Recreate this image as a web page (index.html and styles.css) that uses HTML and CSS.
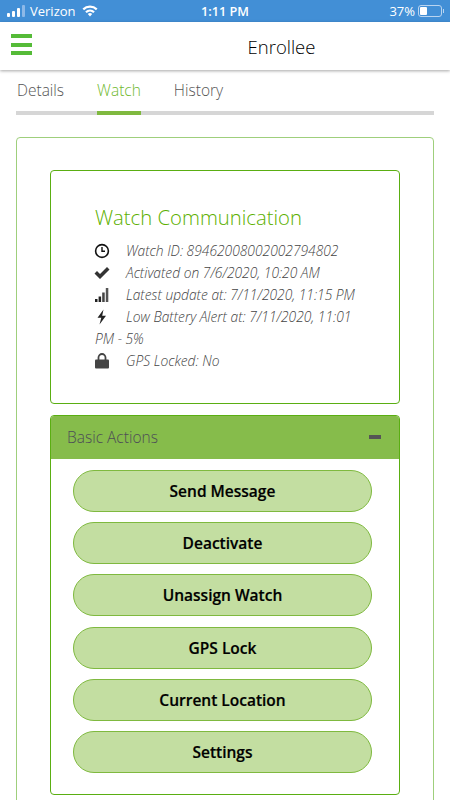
FILE: index.html
```html
<!DOCTYPE html>
<html lang="en">
<head>
  <meta charset="UTF-8" />
  <meta name="viewport" content="width=device-width, initial-scale=1.0" />
  <title>Enrollee</title>
  <link rel="stylesheet" href="styles.css">
</head>
<body>
  <!-- STATUS BAR -->
  <div class="status-bar">
    <div class="status-left">
      <svg class="signal" width="20" height="12" viewBox="0 0 20 12">
        <rect x="0" y="8" width="3" height="4" rx="1" fill="#fff"/>
        <rect x="5" y="6" width="3" height="6" rx="1" fill="#fff"/>
        <rect x="10" y="3" width="3" height="9" rx="1" fill="#fff"/>
        <rect x="15" y="0" width="3" height="12" rx="1" fill="#8db9e8"/>
      </svg>
      <span>Verizon</span>
      <svg class="wifi" width="16" height="12" viewBox="0 0 16 12">
        <path d="M0.5 3.6A10.8 10.8 0 0 1 15.500 3.600L14 5.200A8.600 8.600 0 0 0 2 5.200Z" fill="#fff"/>
        <path d="M3.200 6.400A7 7 0 0 1 12.800 6.400L11.300 8A4.800 4.800 0 0 0 4.700 8Z" fill="#fff"/>
        <path d="M5.800 9.100A3.200 3.200 0 0 1 10.200 9.100L8 11.600Z" fill="#fff"/>
      </svg>
    </div>
    <div class="status-time">1:11 PM</div>
    <div class="status-right">
      <span>37%</span>
      <div class="battery"><div class="battery-level"></div></div>
      <div class="battery-tip"></div>
    </div>
  </div>

  <!-- TOP BAR -->
  <div class="top-bar">
    <div class="menu-toggle"><i></i><i></i><i></i></div>
    <div class="top-title">Enrollee</div>
  </div>

  <!-- TABS -->
  <div class="tabs">
    <a class="tab">Details</a>
    <a class="tab active">Watch</a>
    <a class="tab">History</a>
  </div>

  <section class="panel">
    <!-- WATCH INFO -->
    <div class="info-card">
      <h2>Watch Communication</h2>
      <p class="info-line">
        <svg class="info-icon" viewBox="0 0 16 16" width="16" height="16">
          <circle cx="8" cy="8" r="6.400" fill="none" stroke="#111" stroke-width="1.600"/>
          <path d="M8 4v4.300h3" fill="none" stroke="#111" stroke-width="1.400"/>
        </svg>Watch ID: 89462008002002794802</p>
      <p class="info-line">
        <svg class="info-icon" viewBox="0 0 16 16" width="16" height="16">
          <path d="M0.500 8.500L3 6L6 9L13 2L15.500 4.500L6 14Z" fill="#333"/>
        </svg>Activated on 7/6/2020, 10:20 AM</p>
      <p class="info-line">
        <svg class="info-icon" viewBox="0 0 16 16" width="16" height="16">
          <rect x="1" y="12" width="2.500" height="3" fill="#222"/>
          <rect x="4.600" y="9.500" width="2.500" height="5.500" fill="#222"/>
          <rect x="8.200" y="5.500" width="2.500" height="9.500" fill="#444"/>
          <rect x="11.800" y="1" width="2.500" height="14" fill="#555"/>
        </svg>Latest update at: 7/11/2020, 11:15 PM</p>
      <p class="info-line">
        <svg class="info-icon" viewBox="0 0 16 16" width="16" height="16">
          <path d="M9.500 0.500L3.500 8.800H7.300L5.500 15.500L12 6.800H8.200Z" fill="#222"/>
        </svg>Low Battery Alert at: 7/11/2020, 11:01 PM - 5%</p>
      <p class="info-line">
        <svg class="info-icon" viewBox="0 0 16 16" width="16" height="16">
          <path d="M4.500 7V4.500a3.500 3.500 0 0 1 7 0V7" fill="none" stroke="#444" stroke-width="1.800"/>
          <rect x="1" y="6.500" width="14" height="9" rx="1" fill="#444"/>
        </svg>GPS Locked: No</p>
    </div>

    <!-- BASIC ACTIONS -->
    <div class="accordion">
      <div class="accordion-head">
        <span>Basic Actions</span>
        <i class="collapse-icon"></i>
      </div>
      <div class="accordion-body">
        <button class="action-btn">Send Message</button>
        <button class="action-btn">Deactivate</button>
        <button class="action-btn">Unassign Watch</button>
        <button class="action-btn">GPS Lock</button>
        <button class="action-btn">Current Location</button>
        <button class="action-btn">Settings</button>
      </div>
    </div>
  </section>
</body>
</html>
```

FILE: styles.css
```css
* {margin: 0; padding: 0; box-sizing: border-box;}
html, body {height: 800px; overflow: hidden;}
body {
  font-family: 'Open Sans', sans-serif;
  background: #fff;
  color: #333;
}

/* Status bar */
.status-bar {
  height: 22px;
  background: #428fd6;
  color: #fff;
  font-size: 13px;
  display: flex;
  align-items: center;
  justify-content: space-between;
  padding: 0 6px 0 7px;
  position: relative;
}
.status-left, .status-right {display: flex; align-items: center;}
.status-left span {margin: 0 6px 0 3px;}
.status-time {
  position: absolute;
  left: 201px;
  font-weight: 600;
  font-size: 12.700px;
}
.battery {
  width: 24px;
  height: 12px;
  border: 1px solid #b9d4f0;
  border-radius: 3px;
  padding: 1px;
  margin-left: 3px;
}
.battery-level {width: 37%; height: 100%; background: #fff; border-radius: 1px;}
.battery-tip {width: 1px; height: 4px; background: #b9d4f0; margin-left: 1px;}

/* Top bar */
.top-bar {
  height: 48px;
  background: #fff;
  box-shadow: 0 1px 3px rgba(0,0,0,0.35);
  display: flex;
  align-items: center;
  justify-content: center;
  position: relative;
}
.menu-toggle {
  position: absolute;
  left: 11px;
  top: 12px;
  width: 21px;
  display: flex;
  flex-direction: column;
  gap: 4.500px;
}
.menu-toggle i {display: block; height: 4px; background: #55bb38;}
.top-title {font-size: 18.500px; font-weight: 300; color: #000; margin-left: 113px;}

/* Tabs */
.tabs {
  margin: 0 16px;
  height: 45px;
  display: flex;
  gap: 33px;
  padding-left: 1px;
  border-bottom: 4px solid #d6d6d6;
}
.tab {
  font-size: 15.500px;
  font-weight: 300;
  line-height: 20px;
  padding-top: 10px;
  color: #555;
  height: 45px;
}
.tab.active {color: #6fb82e; border-bottom: 4px solid #7fb93f;}

/* Panel */
.panel {
  margin: 22px 16px 0;
  padding: 32px 33px 0;
  border: 1px solid #9fcf7c;
  border-radius: 4px;
  height: 720px;
}
.info-card {
  height: 234px;
  border: 1px solid #5aae12;
  border-radius: 4px;
  padding: 33px 44px 0;
}
.info-card h2 {
  font-size: 20.300px;
  line-height: 26px;
  font-weight: 300;
  color: #5cb000;
  margin-bottom: 10px;
}
.info-line {
  font-size: 13.800px;
  font-weight: 300;
  line-height: 22px;
  font-style: italic;
  color: #444;
}
.info-icon {
  display: inline-block;
  vertical-align: -3px;
  margin-left: -1px;
  margin-right: 16px;
}

/* Accordion */
.accordion {
  margin-top: 11px;
  border: 1px solid #5aae12;
  border-radius: 4px;
  overflow: hidden;
}
.accordion-head {
  height: 43px;
  background: #86bc4b;
  color: #4d4d57;
  font-size: 15.500px;
  font-weight: 300;
  display: flex;
  align-items: center;
  justify-content: space-between;
  padding: 0 18px 2px 16px;
}
.collapse-icon {display: block; width: 12px; height: 4px; background: #555;}
.accordion-body {
  padding: 11px 27px 21px 22px;
  display: flex;
  flex-direction: column;
  gap: 10.200px;
}
.action-btn {
  height: 42px;
  background: #c3dea1;
  border: 1px solid #7fb93f;
  border-radius: 21px;
  font-family: 'Open Sans', sans-serif;
  font-size: 15.500px;
  font-weight: 600;
  color: #000;
  -webkit-text-stroke: 0.2px #000;
}
```
